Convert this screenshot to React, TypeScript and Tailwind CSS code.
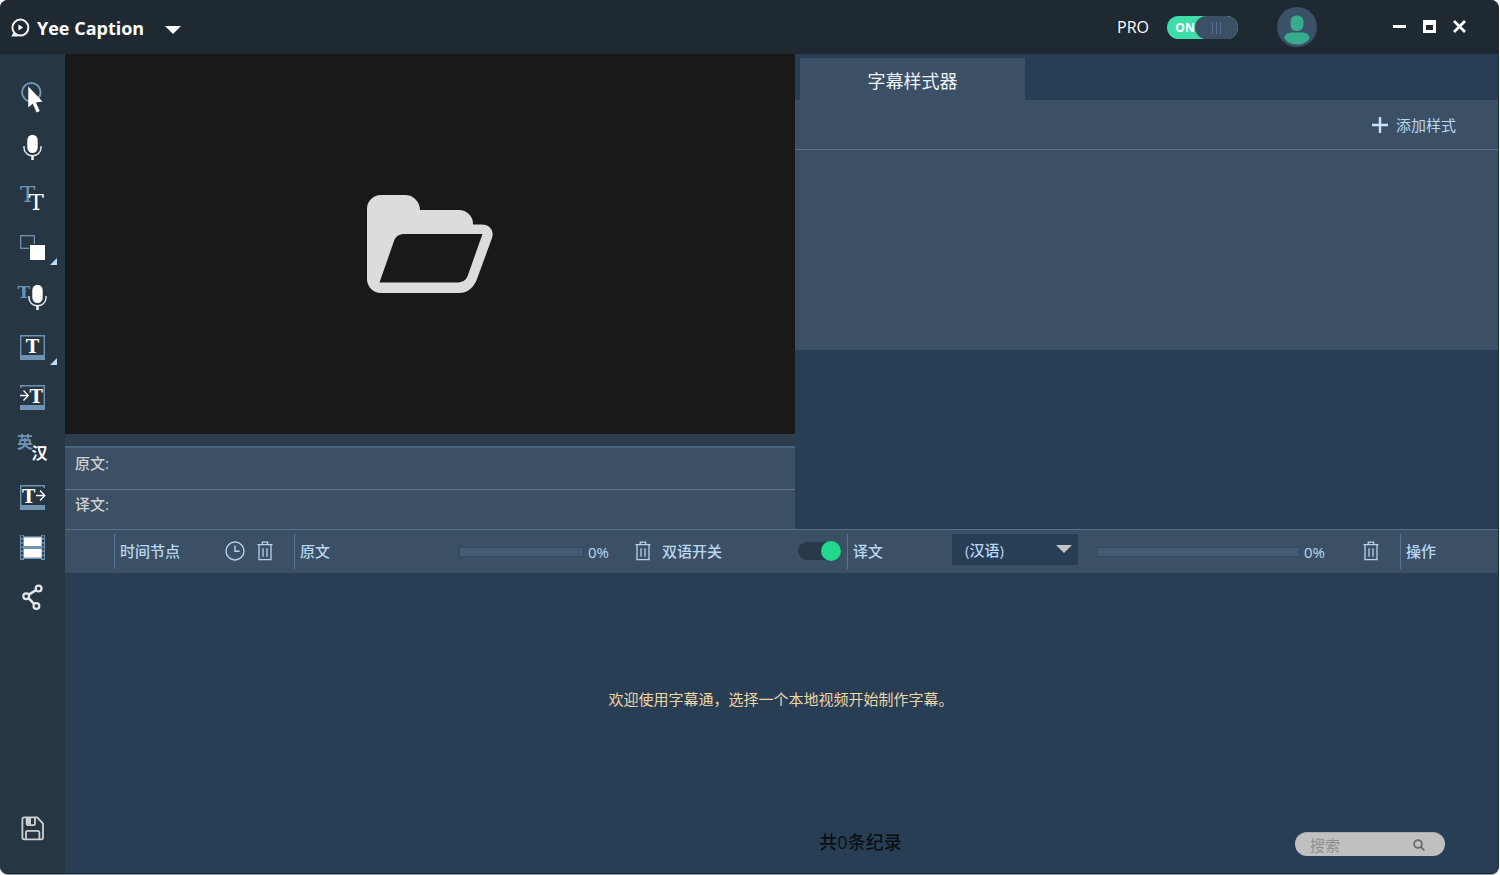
import React, { useState } from "react";

const BLUE = "#7193b3";

function ToolButton({ label, children }: { label: string; children: React.ReactNode }) {
  return (
    <button type="button" aria-label={label} className="block h-[50px] w-16 shrink-0">
      <svg viewBox="0 0 64 50" className="h-[50px] w-16" fill="none">
        {children}
      </svg>
    </button>
  );
}

function GlyphT({ x, y, size, color, bold }: { x: number; y: number; size: number; color: string; bold?: boolean }) {
  return (
    <text x={x} y={y} fontSize={size} fill={color} fontWeight={bold ? 700 : 400} fontFamily="'DejaVu Serif', serif">
      T
    </text>
  );
}

function MicShape({ cx }: { cx: number }) {
  return (
    <g transform={`translate(${cx} 0)`}>
      <rect x="-5.2" y="12.8" width="10.4" height="18.2" rx="5.2" fill="#fff" />
      <path d="M-8.5 24v1.8a8.5 8 0 0 0 17 0V24" stroke="#dfe5ea" strokeWidth="1.5" />
      <path d="M0 33.6v4.4" stroke="#fff" strokeWidth="2.4" />
    </g>
  );
}

function Corner() {
  return <path d="M50 43h7v-7z" fill="#bcdcfa" />;
}

function Trash() {
  return (
    <svg viewBox="0 0 16 20" className="h-5 w-4" fill="none" stroke="#b5d3ee" strokeWidth="1.3">
      <path d="M0.5 3.6h15M5.3 3.4V1.2h5.4v2.2M2 4v14.6h12V4M6 7.2v8.6M10 7.2v8.6" />
    </svg>
  );
}

function Divider() {
  return <span className="mr-[5px] h-[35px] w-px shrink-0 bg-[#567695]" />;
}

function Progress({ label, className }: { label: string; className: string }) {
  return (
    <div
      role="progressbar"
      aria-label={label}
      aria-valuenow={0}
      aria-valuemin={0}
      aria-valuemax={100}
      className={`mt-[2px] h-[10px] border border-[#2f4a66] bg-[#445b74] ${className}`}
    />
  );
}

function Sidebar() {
  return (
    <nav aria-label="工具" className="flex w-[65px] shrink-0 flex-col bg-[#263642] pt-[18px] pb-[20px]">
      <ToolButton label="选择">
        <circle cx="31.3" cy="20.3" r="9.3" stroke={BLUE} strokeWidth="2" />
        <path d="M28.3 14.5v21l4.4-4 3.9 9 3.2-1.4-3.9-8.700 6.600-1z" fill="#fff" />
      </ToolButton>
      <ToolButton label="语音">
        <MicShape cx={32.5} />
      </ToolButton>
      <ToolButton label="文字">
        <GlyphT x={20} y={30} size={23} color={BLUE} />
        <GlyphT x={28.5} y={38} size={23} color="#fff" />
      </ToolButton>
      <ToolButton label="图层">
        <rect x="20.7" y="13.7" width="13.6" height="12.6" stroke={BLUE} strokeWidth="1.3" />
        <rect x="29" y="22" width="17" height="17" fill="#263642" />
        <rect x="30" y="23" width="15" height="15" fill="#fff" />
        <Corner />
      </ToolButton>
      <ToolButton label="语音转文字">
        <GlyphT x={17.5} y={25.5} size={17} color={BLUE} bold />
        <MicShape cx={37.5} />
      </ToolButton>
      <ToolButton label="字幕">
        <path d="M20.7 37V13.7h23.6V37" stroke={BLUE} strokeWidth="1.4" />
        <path d="M20 33h25v5H20z" fill={BLUE} />
        <GlyphT x={25.8} y={30.6} size={18} color="#fff" bold />
        <Corner />
      </ToolButton>
      <ToolButton label="导入字幕">
        <path d="M20.7 16v-2.3h23.6V37" stroke={BLUE} strokeWidth="1.4" />
        <path d="M20 33h25v5H20z" fill={BLUE} />
        <path d="M20 23.5h8M23.500 18.5l4.800 5-4.800 5" stroke="#fff" strokeWidth="1.3" />
        <GlyphT x={29.6} y={30.6} size={18} color="#fff" bold />
      </ToolButton>
      <ToolButton label="翻译">
        <text x="17" y="26" fontSize="16" fontWeight="700" fill={BLUE} fontFamily="'Noto Sans CJK SC', sans-serif">英</text>
        <text x="31.5" y="37" fontSize="16" fontWeight="700" fill="#fff" fontFamily="'Noto Sans CJK SC', sans-serif">汉</text>
      </ToolButton>
      <ToolButton label="导出字幕">
        <path d="M20.7 37V13.7h23.6V16" stroke={BLUE} strokeWidth="1.4" />
        <path d="M20 33h25v5H20z" fill={BLUE} />
        <GlyphT x={22} y={30.6} size={18} color="#fff" bold />
        <path d="M36 23.5h8.6M40 18.5l4.800 5-4.800 5" stroke="#fff" strokeWidth="1.3" />
      </ToolButton>
      <ToolButton label="视频">
        <path d="M20 13h25v25H20z" fill={BLUE} />
        <path d="M21.900 13.500v24M43.100 13.500v24" stroke="#263642" strokeWidth="1.7" strokeDasharray="2.600 1.500" />
        <path d="M24 13h17v1.200H24zM24 37h17v1H24z" fill="#263642" />
        <path d="M24 15.500h17.500V24H24zM24 27h17.500v8.600H24z" fill="#fff" />
      </ToolButton>
      <ToolButton label="分享">
        <g stroke="#e3e6e9" strokeWidth="2.2">
          <circle cx="38.6" cy="16.6" r="2.900" />
          <circle cx="26.2" cy="24.2" r="2.900" />
          <circle cx="36.4" cy="34" r="2.900" />
          <path d="M36 18.2l-7.2 4.4M28.5 26.2l5.6 5.6" strokeWidth="2.600" />
        </g>
      </ToolButton>
      <div className="mt-auto">
        <ToolButton label="保存">
          <g stroke="#cfd2d5" strokeWidth="1.8">
            <path d="M24 14.4h13.2l5.8 6.2v14.2a1.6 1.6 0 0 1-1.6 1.6H24a1.6 1.6 0 0 1-1.6-1.6V16a1.6 1.6 0 0 1 1.6-1.6z" />
            <path d="M26.6 14.6v6.2a1.4 1.4 0 0 0 1.4 1.4h5.6a1.4 1.4 0 0 0 1.4-1.4v-6.2" />
            <path d="M26 36v-6.6a1.6 1.6 0 0 1 1.6-1.6h10.2a1.6 1.6 0 0 1 1.6 1.6V36" />
          </g>
          <path d="M27 15h4v6.4h-4z" fill="#cfd2d5" />
        </ToolButton>
      </div>
    </nav>
  );
}

function Header() {
  const [pro, setPro] = useState(true);
  return (
    <header className="flex h-[54px] shrink-0 items-center bg-[#1f2932] pr-[32px] pb-[2px] pl-[10px] text-white">
      <svg viewBox="0 0 20 20" className="mt-1 h-5 w-5" fill="none">
        <circle cx="10.400" cy="9.600" r="8" stroke="#f2f2f2" strokeWidth="2" />
        <path d="M3.600 14.200L1.200 18.600h7z" fill="#f2f2f2" />
        <path d="M8.400 6.4v6.200l4.800-3.100z" fill="#fff" />
      </svg>
      <h1 className="mt-[4px] ml-[7px] text-lg leading-6 font-bold">Yee Caption</h1>
      <button type="button" aria-label="菜单" className="mt-[7px] ml-[21px]">
        <svg viewBox="0 0 16 8" className="h-2 w-4">
          <path d="M0 0h16L8 8z" fill="#fff" />
        </svg>
      </button>
      <span id="pro-label" className="mt-[2px] ml-auto text-base leading-6">PRO</span>
      <button
        type="button"
        role="switch"
        aria-checked={pro}
        aria-labelledby="pro-label"
        onClick={() => setPro(!pro)}
        className="mt-[3px] ml-[18px] flex h-[23px] w-[71px] items-center overflow-hidden rounded-full bg-[#3fdda8] pl-2"
      >
        <span className="w-5 text-xs leading-4 font-bold">ON</span>
        <span className="flex h-full flex-1 items-center justify-center gap-[3px] rounded-full bg-[#3b5064]">
          <i className="h-3 w-px bg-[#53708e]" />
          <i className="h-3 w-px bg-[#53708e]" />
          <i className="h-3 w-px bg-[#53708e]" />
        </span>
      </button>
      <button type="button" aria-label="用户" className="mt-[2px] ml-[39px]">
        <svg viewBox="0 0 40 40" className="h-10 w-10">
          <circle cx="20" cy="20" r="20" fill="#3b5168" />
          <rect x="13.5" y="8.5" width="13" height="15.5" rx="6" fill="#38ab8c" />
          <path d="M7.500 31.500c0-4 3-6 7.500-6h10c4.500 0 7.500 2 7.500 6C29.500 35.500 25.500 37.600 20 37.600S10.500 35.500 7.500 31.500z" fill="#38ab8c" />
        </svg>
      </button>
      <div className="ml-[76px] flex items-center gap-[17px]">
        <button type="button" aria-label="最小化">
          <svg viewBox="0 0 13 13" className="h-[13px] w-[13px]"><path d="M0 5h13v3H0z" fill="#fff" /></svg>
        </button>
        <button type="button" aria-label="最大化">
          <svg viewBox="0 0 13 13" className="h-[13px] w-[13px]"><path d="M0 0h13v13H0zM3 5v5h7V5z" fill="#fff" fillRule="evenodd" /></svg>
        </button>
        <button type="button" aria-label="关闭">
          <svg viewBox="0 0 13 13" className="h-[13px] w-[13px]"><path d="M1 1l11 11M12 1L1 12" stroke="#fff" strokeWidth="2.8" /></svg>
        </button>
      </div>
    </header>
  );
}

function VideoPane() {
  return (
    <section aria-label="视频" className="flex min-w-0 flex-[730_1_0%] flex-col">
      <button type="button" aria-label="打开视频" className="flex h-[381px] items-center justify-center border-b border-[#283e55] bg-[#191919]">
        <svg viewBox="0 0 126 98" className="h-[98px] w-[126px]">
          <path
            fillRule="evenodd"
            fill="#dcdcdc"
            d="M14 0h24a15 15 0 0 1 15 15h39a14 14 0 0 1 14 14.500h9c7.500 0 12.500 6 10 13.500L110 84c-3 8-9 14-18 14H14A14 14 0 0 1 0 84V14A14 14 0 0 1 14 0zM38 39c-6 0-9.500 2.500-11 7L12.500 87.500H90c5 0 9-2 10.800-7L115.500 39z"
          />
        </svg>
      </button>
      <div className="h-[11px] bg-[#2e3d4b]" />
      <div className="flex h-[43px] border-t-2 border-[#4a6380] bg-[#3b5064] pt-[5px] pl-[10px] text-[15px] leading-5 font-medium text-[#d0d0d0]">原文:</div>
      <div className="flex h-[40px] border-t border-[#5e768b] bg-[#3b5064] pt-[4px] pl-[10px] text-[15px] leading-5 font-medium text-[#d0d0d0]">译文:</div>
    </section>
  );
}

function StylePane() {
  return (
    <section aria-label="字幕样式" className="flex min-w-0 flex-[703_1_0%] flex-col">
      <div role="tablist" className="flex h-[46px] items-end pl-[5px]">
        <button type="button" role="tab" aria-selected="true" className="h-[42px] w-[225px] pt-[4px] bg-[#3b5064] text-lg leading-6 text-[#eef3f8]">
          字幕样式器
        </button>
      </div>
      <div className="flex h-[50px] items-center justify-end border-b border-[#5a7086] bg-[#3b5064] pr-[42px]">
        <button type="button" className="flex items-center gap-2 text-[15px] leading-5 text-[#b8d6f2]">
          <svg viewBox="0 0 16 16" className="h-4 w-4"><path d="M8 0v16M0 8h16" stroke="#c8e2fb" strokeWidth="2.400" /></svg>
          添加样式
        </button>
      </div>
      <div className="h-[200px] bg-[#3b5064]" />
    </section>
  );
}

function CaptionTable() {
  const [dual, setDual] = useState(true);
  return (
    <table className="w-full table-fixed border-collapse text-[15px] leading-5 text-[#b8d6f2]">
      <colgroup>
        <col className="w-[49px]" />
        <col className="w-[180px]" />
        <col />
        <col />
        <col className="w-[98px]" />
      </colgroup>
      <thead>
        <tr className="h-[43px] border-t border-[#54708a] bg-[#3b5064] text-left">
          <th className="p-0" aria-label="序号" />
          <th className="p-0 font-medium">
            <div className="flex items-center">
              <Divider />
              时间节点
              <div className="ml-auto flex items-center gap-3 pr-[21px]">
                <button type="button" aria-label="时间">
                  <svg viewBox="0 0 20 20" className="h-5 w-5" fill="none" stroke="#b5d3ee" strokeWidth="1.4">
                    <circle cx="10" cy="10" r="9" />
                    <path d="M10 4.500v5.800h4.600" />
                  </svg>
                </button>
                <button type="button" aria-label="清除时间"><Trash /></button>
              </div>
            </div>
          </th>
          <th className="p-0 font-medium">
            <div className="flex items-center">
              <Divider />
              <span className="w-[159px]">原文</span>
              <Progress label="原文进度" className="w-[125px]" />
              <span className="mt-px ml-1 w-[47px] font-normal">0%</span>
              <button type="button" aria-label="清除原文"><Trash /></button>
              <span id="dual-label" className="ml-[11px]">双语开关</span>
              <button
                type="button"
                role="switch"
                aria-checked={dual}
                aria-labelledby="dual-label"
                onClick={() => setDual(!dual)}
                className="mr-[6px] ml-auto flex h-5 w-[43px] items-center"
              >
                <span className="flex h-[18px] w-full items-center justify-end rounded-full bg-[#283a49]">
                  <span className="h-5 w-5 rounded-full bg-[#22d88c]" />
                </span>
              </button>
            </div>
          </th>
          <th className="p-0 font-medium">
            <div className="flex items-center">
              <Divider />
              <span className="w-[99px]">译文</span>
              <span className="relative mb-[3px] block">
                <select aria-label="目标语言" className="h-[31px] w-[126px] appearance-none bg-[#283e55] pl-[13px] text-[15px] text-[#b8d6f2]">
                  <option>(汉语)</option>
                  <option>(英语)</option>
                </select>
                <svg viewBox="0 0 16 8" className="pointer-events-none absolute top-[11px] right-[6px] h-2 w-4">
                  <path d="M0 0h16L8 8z" fill="#c4c4c4" />
                </svg>
              </span>
              <Progress label="译文进度" className="ml-[19px] min-w-0 flex-1" />
              <span className="mt-px ml-1 w-[59px] font-normal">0%</span>
              <button type="button" aria-label="清除译文" className="mr-[21px]"><Trash /></button>
            </div>
          </th>
          <th className="p-0 font-medium">
            <div className="flex items-center">
              <Divider />
              操作
            </div>
          </th>
        </tr>
      </thead>
    </table>
  );
}

export default function App() {
  return (
    <div className="flex min-h-screen flex-col bg-white pr-px pb-px font-['Open_Sans','Noto_Sans_CJK_SC',sans-serif]">
      <div className="flex flex-1 flex-col overflow-hidden rounded-lg border-r border-b border-[#1b2731] bg-[#283e55] shadow-[0_1px_0_#8b949c]">
        <Header />
        <div className="flex flex-1">
          <Sidebar />
          <main className="flex min-w-0 flex-1 flex-col">
            <div className="flex">
              <VideoPane />
              <StylePane />
            </div>
            <CaptionTable />
            <p className="flex flex-1 items-center justify-center pr-px text-[15px] leading-5 text-[#ecd6a6]">
              欢迎使用字幕通，选择一个本地视频开始制作字幕。
            </p>
            <footer className="grid h-[48px] shrink-0 grid-cols-[1fr_auto_1fr] items-start pr-[53px]">
              <span className="col-start-2 mt-[5px] ml-[211px] text-lg leading-6 font-medium text-[#0a0f14]">共0条纪录</span>
              <div className="col-start-3 mt-[7px] flex h-[24px] w-[150px] items-center justify-self-end rounded-full border-t border-[#a9abae] bg-[#c0c0c0] pr-5 pl-[15px]">
                <input
                  type="text"
                  aria-label="搜索"
                  placeholder="搜索"
                  className="w-full min-w-0 bg-transparent text-[15px] leading-5 text-[#555] outline-none placeholder:text-[#8f8f8f]"
                />
                <svg viewBox="0 0 12 12" className="h-3 w-3 shrink-0" fill="none" stroke="#6b6b6b" strokeWidth="1.8">
                  <circle cx="5" cy="5" r="3.900" />
                  <path d="M7.800 7.800l3.600 3.600" />
                </svg>
              </div>
            </footer>
          </main>
        </div>
      </div>
    </div>
  );
}
